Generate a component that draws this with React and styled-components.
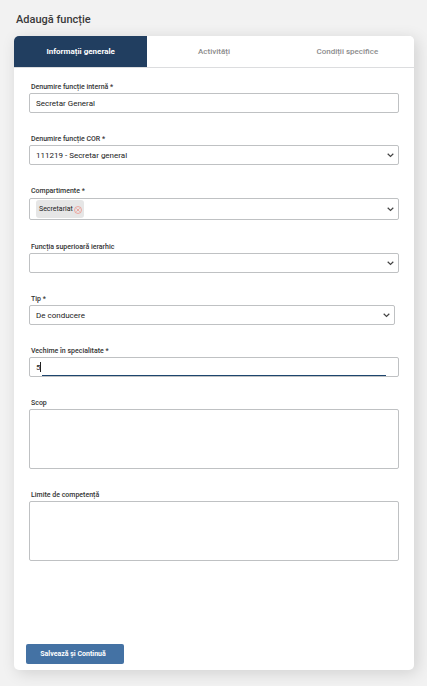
import React, { useState } from "react";
import styled, { createGlobalStyle, css } from "styled-components";

const GlobalStyle = createGlobalStyle`
  * { box-sizing: border-box; }
  body {
    margin: 0;
    background: #f2f2f2;
    color: #333;
    font-family: Roboto, "Liberation Sans", sans-serif;
  }
  button, input, select, textarea { font-family: inherit; }
`;

const Page = styled.main`
  padding: 12px 13px 16px 14px;
`;

const Title = styled.h1`
  margin: 0 0 8px;
  padding-left: 2px;
  font-size: 11px;
  line-height: 16px;
  font-weight: 500;
  color: #3a3a3a;
`;

const Card = styled.section`
  background: #fff;
  border-radius: 5px;
  overflow: hidden;
  box-shadow: 3px 3px 16px rgba(0, 0, 0, 0.14);
`;

const Tabs = styled.div`
  display: grid;
  grid-template-columns: repeat(3, 1fr);
  border-bottom: 1px solid #dcdddf;
`;

const Tab = styled.button`
  height: 31px;
  padding: 0;
  border: 0;
  font-size: 8px;
  line-height: 12px;
  font-weight: ${(p) => (p.$active ? 700 : 500)};
  color: ${(p) => (p.$active ? "#fff" : "#8c8c8c")};
  background: ${(p) => (p.$active ? "#213e60" : "#fff")};
`;

const Form = styled.form`
  display: flex;
  flex-direction: column;
  gap: 20px;
  padding: 13px 15px 0;
`;

const Field = styled.div`
  display: flex;
  flex-direction: column;
  padding-right: ${(p) => (p.$inset ? "4px" : "0")};
`;

const Label = styled.label`
  padding-left: 2px;
  font-size: 7px;
  line-height: 12px;
  font-weight: 500;
  color: #333;
`;

const Control = styled.div`
  position: relative;
  display: flex;
`;

const boxStyle = css`
  width: 100%;
  border: 1px solid #bfc1c3;
  border-radius: 2px;
  background: #fff;
  color: #212121;
  font-size: 8px;
  outline: none;
`;

const TextInput = styled.input`
  ${boxStyle}
  height: 20px;
  padding: 0 6px;
`;

const Select = styled.select`
  ${boxStyle}
  height: 20px;
  padding: 0 20px 0 6px;
  appearance: none;
`;

const TextArea = styled.textarea`
  ${boxStyle}
  display: block;
  height: 60px;
  padding: 6px;
  resize: none;
`;

const TagBox = styled.div`
  ${boxStyle}
  display: flex;
  align-items: center;
  height: 22px;
  margin: 1px 0;
  padding: 0 20px 0 6px;
`;

const Tag = styled.span`
  display: flex;
  align-items: center;
  gap: 1px;
  height: 18px;
  padding: 0 2px 0 3px;
  border-radius: 3px;
  background: #e6e6e6;
  font-size: 7px;
  line-height: 12px;
`;

const RemoveButton = styled.button`
  display: flex;
  padding: 2px 0 0;
  border: 0;
  background: none;
`;

const TagInput = styled.input`
  flex: 1;
  min-width: 0;
  border: 0;
  padding: 0 4px;
  background: none;
  font-size: 8px;
  outline: none;
`;

const ChevronSvg = styled.svg`
  position: absolute;
  right: 5px;
  top: 50%;
  margin-top: -2px;
  pointer-events: none;
`;

const FocusLine = styled.span`
  position: absolute;
  left: 13px;
  right: 13px;
  bottom: 1px;
  height: 1px;
  background: #1d456e;
`;

const Caret = styled.span`
  position: absolute;
  left: 11px;
  top: 5px;
  width: 1px;
  height: 10px;
  background: #222;
`;

const Footer = styled.footer`
  padding: 83px 12px 6px;
`;

const SaveButton = styled.button`
  display: block;
  width: 98px;
  height: 20px;
  padding: 0 4px 0 0;
  border: 0;
  border-radius: 2px;
  background: #4472a4;
  color: #fff;
  font-size: 7px;
  line-height: 12px;
  font-weight: 700;
`;

function Chevron() {
  return (
    <ChevronSvg width="7" height="5" viewBox="0 0 7 5" aria-hidden="true">
      <path d="M.7 .8 3.5 3.5 6.3 .8" fill="none" stroke="#444" strokeWidth="1.2" />
    </ChevronSvg>
  );
}

function SelectField({ id, label, options, inset }) {
  return (
    <Field $inset={inset}>
      <Label htmlFor={id}>{label}</Label>
      <Control>
        <Select id={id}>
          {options.map((o) => (
            <option key={o}>{o}</option>
          ))}
        </Select>
        <Chevron />
      </Control>
    </Field>
  );
}

function AreaField({ id, label }) {
  return (
    <Field>
      <Label htmlFor={id}>{label}</Label>
      <TextArea id={id} />
    </Field>
  );
}

const TABS = ["Informații generale", "Activități", "Condiții specifice"];

export default function App() {
  const [active, setActive] = useState(0);
  return (
    <>
      <GlobalStyle />
      <Page>
        <Title>Adaugă funcție</Title>
        <Card>
          <Tabs role="tablist">
            {TABS.map((name, i) => (
              <Tab
                key={name}
                type="button"
                role="tab"
                aria-selected={i === active}
                $active={i === active}
                onClick={() => setActive(i)}
              >
                {name}
              </Tab>
            ))}
          </Tabs>
          <Form id="functie" onSubmit={(e) => e.preventDefault()}>
            <Field>
              <Label htmlFor="interna">Denumire funcție internă *</Label>
              <TextInput id="interna" defaultValue="Secretar General" />
            </Field>
            <SelectField id="cor" label="Denumire funcție COR *" options={["111219 - Secretar general"]} />
            <Field>
              <Label htmlFor="compartimente">Compartimente *</Label>
              <Control>
                <TagBox>
                  <Tag>
                    Secretariat
                    <RemoveButton type="button" aria-label="Elimină Secretariat">
                      <svg width="8" height="8" viewBox="0 0 8 8" fill="none" stroke="#ee8a80" strokeWidth=".7">
                        <circle cx="4" cy="4" r="3.5" />
                        <path d="M2.4 2.4l3.2 3.2M5.6 2.4L2.4 5.6" />
                      </svg>
                    </RemoveButton>
                  </Tag>
                  <TagInput id="compartimente" role="combobox" aria-expanded="false" />
                </TagBox>
                <Chevron />
              </Control>
            </Field>
            <SelectField id="superioara" label="Funcția superioară ierarhic" options={[""]} />
            <SelectField id="tip" label="Tip *" options={["De conducere"]} inset />
            <Field>
              <Label htmlFor="vechime">Vechime în specialitate *</Label>
              <Control>
                <TextInput id="vechime" inputMode="numeric" defaultValue="5" />
                <FocusLine />
                <Caret />
              </Control>
            </Field>
            <AreaField id="scop" label="Scop" />
            <AreaField id="limite" label="Limite de competență" />
          </Form>
          <Footer>
            <SaveButton type="submit" form="functie">Salvează și Continuă</SaveButton>
          </Footer>
        </Card>
      </Page>
    </>
  );
}
